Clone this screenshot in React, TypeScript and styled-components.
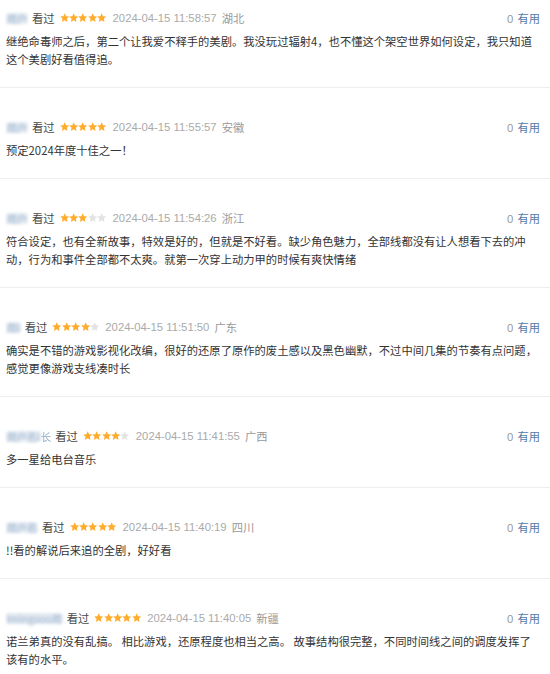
import React from "react";
import styled, { createGlobalStyle } from "styled-components";

const Global = createGlobalStyle`
  html, body { margin: 0; padding: 0; background: #fff; }
  body { font-family: "Liberation Sans", Arial, "Noto Sans CJK SC", sans-serif; }
`;

const List = styled.div`
  width: 550px;
  display: flex;
  flex-direction: column;
`;

const Item = styled.div`
  padding: 29px 10px 19px 6px;
  border-bottom: 1px solid #eeeeee;
  &:first-child { padding-top: 8px; }
`;

const Header = styled.div`
  display: flex;
  align-items: center;
  height: 20px;
  font-size: 11.3px;
  white-space: nowrap;
`;

const Info = styled.div`
  display: flex;
  align-items: center;
  flex: 1;
`;

const Name = styled.span`
  display: inline-flex;
  align-items: center;
  color: #37a;
  margin-right: 4px;
`;

const Blur = styled.span`
  display: inline-block;
  padding: 0 1px;
  color: #9fb6cf;
  background: #e2e9f1;
  border-radius: 3px;
  filter: blur(1.4px);
  font-family: "Noto Sans CJK SC", sans-serif;
  font-size: 10px;
  line-height: 11px;
`;

const Clear = styled.span`
  color: #7f9fc0;
  font-family: "Noto Sans CJK SC", sans-serif;
  font-size: 10.5px;
  opacity: 0.85;
`;

const Watched = styled.span`
  color: #494949;
  font-family: "Noto Sans CJK SC", sans-serif;
  margin-right: 5px;
`;

const Stars = styled.span`
  display: inline-flex;
  align-items: center;
  margin-right: 6px;
`;

const Time = styled.span`
  color: #aaa;
  margin-right: 5px;
`;

const Loc = styled.span`
  color: #999;
  font-family: "Noto Sans CJK SC", sans-serif;
`;

const Votes = styled.span`
  color: #999;
  font-size: 11.3px;
`;

const Useful = styled.span`
  color: #4f7ba8;
  margin-left: 4px;
  font-family: "Noto Sans CJK SC", sans-serif;
`;

const Body = styled.p`
  margin: 4px 0 0;
  font-family: "Noto Sans CJK SC", sans-serif;
  font-size: 11.3px;
  line-height: 18px;
  color: #333;
  white-space: nowrap;
`;

const Star = ({ on }: { on: boolean }) => (
  <svg width="9.4" height="9.4" viewBox="1 1.2 22 21">
    <polygon
      points="12,1.5 15.1,8.3 22.5,9.1 17,14.1 18.5,21.5 12,17.8 5.5,21.5 7,14.1 1.5,9.1 8.9,8.3"
      fill={on ? "#ffac2d" : "#e3e3e3"}
    />
  </svg>
);

type Review = {
  name: string;
  suffix?: string;
  rating: number;
  time: string;
  loc: string;
  lines: string[];
};

const reviews: Review[] = [
  {
    name: "用户",
    rating: 5,
    time: "2024-04-15 11:58:57",
    loc: "湖北",
    lines: [
      "继绝命毒师之后，第二个让我爱不释手的美剧。我没玩过辐射4，也不懂这个架空世界如何设定，我只知道",
      "这个美剧好看值得追。",
    ],
  },
  {
    name: "用户",
    rating: 5,
    time: "2024-04-15 11:55:57",
    loc: "安徽",
    lines: ["预定2024年度十佳之一！"],
  },
  {
    name: "用户",
    rating: 3,
    time: "2024-04-15 11:54:26",
    loc: "浙江",
    lines: [
      "符合设定，也有全新故事，特效是好的，但就是不好看。缺少角色魅力，全部线都没有让人想看下去的冲",
      "动，行为和事件全部都不太爽。就第一次穿上动力甲的时候有爽快情绪",
    ],
  },
  {
    name: "用i",
    rating: 4,
    time: "2024-04-15 11:51:50",
    loc: "广东",
    lines: [
      "确实是不错的游戏影视化改编，很好的还原了原作的废土感以及黑色幽默，不过中间几集的节奏有点问题，",
      "感觉更像游戏支线凑时长",
    ],
  },
  {
    name: "用户名i",
    suffix: "长",
    rating: 4,
    time: "2024-04-15 11:41:55",
    loc: "广西",
    lines: ["多一星给电台音乐"],
  },
  {
    name: "用户名",
    rating: 5,
    time: "2024-04-15 11:40:19",
    loc: "四川",
    lines: ["!!看的解说后来追的全剧，好好看"],
  },
  {
    name: "lmingooo用",
    rating: 5,
    time: "2024-04-15 11:40:05",
    loc: "新疆",
    lines: [
      "诺兰弟真的没有乱搞。 相比游戏，还原程度也相当之高。 故事结构很完整，不同时间线之间的调度发挥了",
      "该有的水平。",
    ],
  },
];

export default function App() {
  return (
    <>
      <Global />
      <List>
        {reviews.map((r, i) => (
          <Item key={i}>
            <Header>
              <Info>
                <Name>
                  <Blur>{r.name}</Blur>
                  {r.suffix && <Clear>{r.suffix}</Clear>}
                </Name>
                <Watched>看过</Watched>
                <Stars>
                  {[0, 1, 2, 3, 4].map((k) => (
                    <Star key={k} on={k < r.rating} />
                  ))}
                </Stars>
                <Time>{r.time}</Time>
                <Loc>{r.loc}</Loc>
              </Info>
              <Votes>
                0<Useful>有用</Useful>
              </Votes>
            </Header>
            <Body>
              {r.lines.map((l, j) => (
                <React.Fragment key={j}>
                  {j > 0 && <br />}
                  {l}
                </React.Fragment>
              ))}
            </Body>
          </Item>
        ))}
      </List>
    </>
  );
}
